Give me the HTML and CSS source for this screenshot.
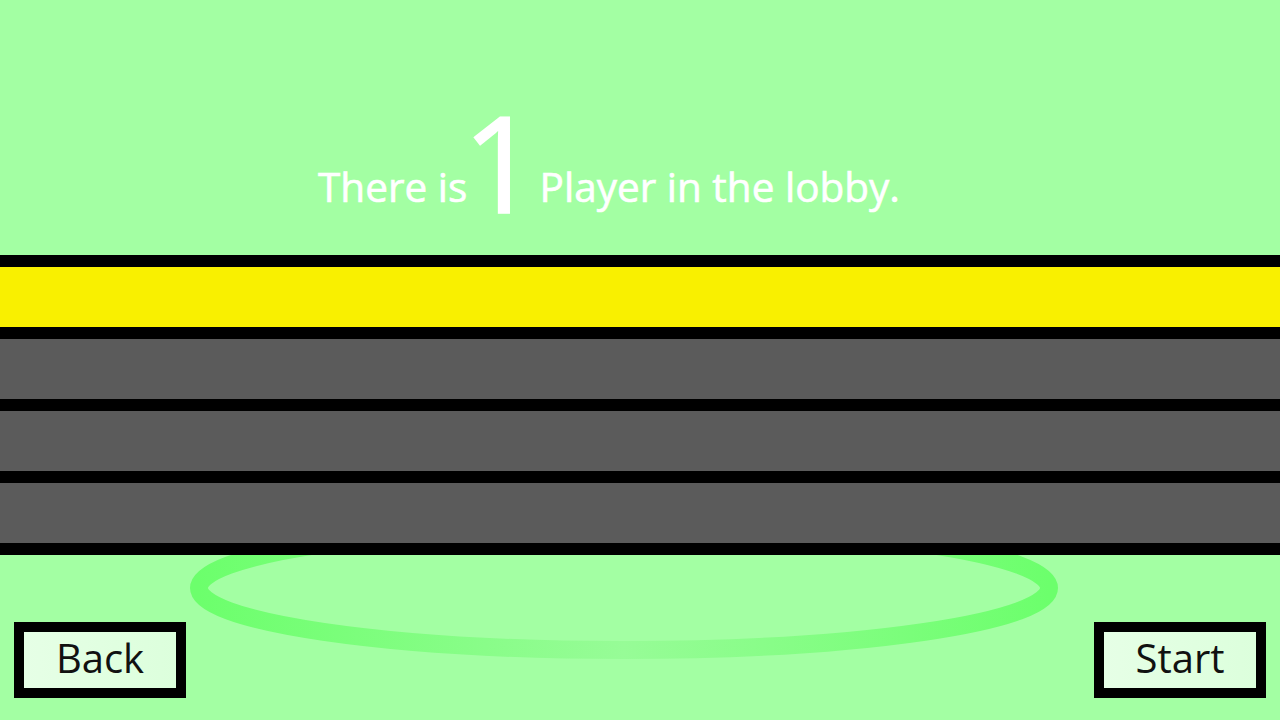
FILE: index.html
```html
<!DOCTYPE html>
<html>
<head>
<meta charset="utf-8">
<link rel="stylesheet" href="styles.css">
</head>
<body>
<div class="screen">
  <svg class="ring" width="1280" height="720" viewBox="0 0 1280 720">
    <defs>
      <linearGradient id="rg" x1="0" y1="0" x2="1" y2="0">
        <stop offset="0" stop-color="#6cff6c"/>
        <stop offset="0.5" stop-color="#97fc97"/>
        <stop offset="1" stop-color="#6cff6c"/>
      </linearGradient>
    </defs>
    <ellipse cx="624" cy="588" rx="425" ry="62" fill="none" stroke="url(#rg)" stroke-width="18"/>
  </svg>
  <header class="title">
    <span class="t-text">There is</span>
    <span class="t-num">1</span>
    <span class="t-text">Player in the lobby.</span>
  </header>
  <section class="rows">
    <div class="row row-active"></div>
    <div class="row"></div>
    <div class="row"></div>
    <div class="row"></div>
  </section>
  <footer class="actions">
    <button class="btn">Back</button>
    <button class="btn">Start</button>
  </footer>
</div>
</body>
</html>
```
FILE: styles.css
```css
html, body {
  margin: 0;
  padding: 0;
}
body {
  background: #a3ffa3;
  font-family: "Open Sans", "Noto Sans", sans-serif;
}
.screen {
  position: relative;
  width: 1280px;
  height: 720px;
  overflow: hidden;
  display: flex;
  flex-direction: column;
}
.ring {
  position: absolute;
  left: 0;
  top: 0;
  z-index: 0;
}
.title {
  position: relative;
  z-index: 1;
  height: 255px;
  box-sizing: border-box;
  padding-left: 318px;
  padding-top: 95px;
  color: #ffffff;
  white-space: nowrap;
  line-height: 1;
}
.t-text {
  font-size: 40.5px;
  -webkit-text-stroke: 0.6px #ffffff;
  vertical-align: baseline;
}
.t-num {
  font-size: 133px;
  -webkit-text-stroke: 1.6px #ffffff;
  vertical-align: -11px;
  margin: 0 -3px 0 -9px;
}
.rows {
  position: relative;
  z-index: 1;
  background: #000000;
  display: flex;
  flex-direction: column;
  gap: 12px;
  padding: 12px 0;
}
.row {
  height: 60px;
  background: #5b5b5b;
}
.row-active {
  background: #f9f000;
}
.actions {
  position: relative;
  z-index: 1;
  flex: 1;
  display: flex;
  justify-content: space-between;
  align-items: flex-end;
  padding: 0 14px 22px;
}
.btn {
  width: 172px;
  height: 76px;
  box-sizing: border-box;
  border: 10px solid #000000;
  background: linear-gradient(90deg, #e6ffe6, #dcffdc);
  font-family: "Open Sans", "Noto Sans", sans-serif;
  font-size: 40px;
  color: #111111;
  padding: 0 0 5px;
  line-height: 1;
}
```
